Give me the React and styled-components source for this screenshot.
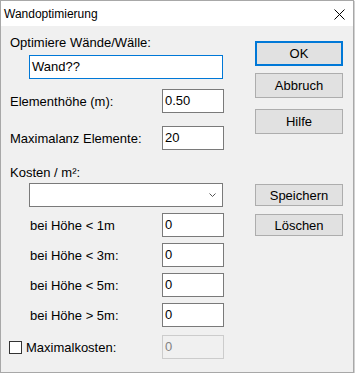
import React from "react"
import styled, { createGlobalStyle } from "styled-components"

const GlobalStyle = createGlobalStyle`
  html, body {
    margin: 0;
    padding: 0;
    background: #ffffff;
  }
  body {
    font-family: "Liberation Sans", Arial, sans-serif;
    color: #000;
  }
`

const Window = styled.div`
  width: 354px;
  height: 373px;
  box-sizing: border-box;
  border: 1px solid #a8a8a8;
  box-shadow: 1px 1px 1px rgba(0, 0, 0, 0.18);
  display: flex;
  flex-direction: column;
  background: #f0f0f0;
`

const TitleBar = styled.div`
  height: 25px;
  flex: none;
  background: #ffffff;
  display: flex;
  align-items: center;
  justify-content: space-between;
  padding: 0 8px 0 3px;
  font-size: 12px;
`

const CloseIcon = styled.svg`
  width: 11px;
  height: 11px;
  margin-top: 2px;
`

const Body = styled.div`
  flex: 1;
  display: flex;
  padding: 0 10px 0 9px;
`

const LeftColumn = styled.div`
  width: 214px;
  display: flex;
  flex-direction: column;
  padding-top: 8px;
`

const RightColumn = styled.div`
  margin-left: auto;
  width: 88px;
  display: flex;
  flex-direction: column;
  padding-top: 15px;
`

const Caption = styled.div`
  font-size: 13px;
  line-height: 18px;
  height: 18px;
  margin-top: ${({ $gap }) => $gap || 0}px;
`

const TextBox = styled.div`
  box-sizing: border-box;
  height: 24px;
  background: ${({ $disabled }) => ($disabled ? "#f0f0f0" : "#ffffff")};
  border: 1px solid
    ${({ $focused, $disabled }) =>
      $focused ? "#0078d7" : $disabled ? "#cccccc" : "#7a7a7a"};
  color: ${({ $disabled }) => ($disabled ? "#838383" : "#000")};
  font-size: 13px;
  line-height: 21px;
  padding: 0 2px;
  width: ${({ $width }) => $width}px;
  margin-left: ${({ $indent }) => $indent || 0}px;
  margin-top: ${({ $gap }) => $gap || 0}px;
`

const ComboBox = styled.div`
  box-sizing: border-box;
  height: 24px;
  width: 194px;
  margin-left: 19px;
  margin-top: 1px;
  background: #ffffff;
  border: 1px solid #7a7a7a;
  display: flex;
  align-items: center;
  justify-content: flex-end;
  padding-right: 6px;
`

const FieldRow = styled.div`
  display: flex;
  align-items: center;
  justify-content: space-between;
  margin-top: ${({ $gap }) => $gap}px;
`

const FieldLabel = styled.div`
  font-size: 13px;
  padding-left: ${({ $indent }) => $indent || 0}px;
  display: flex;
  align-items: center;
`

const CheckBox = styled.span`
  box-sizing: border-box;
  width: 13px;
  height: 13px;
  border: 1px solid #333333;
  background: #ffffff;
  margin-right: 4px;
  margin-left: -1px;
`

const Button = styled.div`
  box-sizing: border-box;
  height: ${({ $height }) => $height}px;
  margin-top: ${({ $gap }) => $gap}px;
  background: #e1e1e1;
  border: ${({ $default }) => ($default ? "2px solid #0078d7" : "1px solid #adadad")};
  font-size: 13px;
  display: flex;
  align-items: center;
  justify-content: center;
`

const heights = [
  { label: "bei Höhe < 1m", gap: 6 },
  { label: "bei Höhe < 3m:", gap: 6 },
  { label: "bei Höhe < 5m:", gap: 6 },
  { label: "bei Höhe > 5m:", gap: 6 },
]

export default function App() {
  return (
    <>
      <GlobalStyle />
      <Window>
        <TitleBar>
          <span>Wandoptimierung</span>
          <CloseIcon viewBox="0 0 11 11">
            <path d="M0.5 0.5 L10.5 10.5 M10.5 0.5 L0.5 10.5" stroke="#000" strokeWidth="1" fill="none" />
          </CloseIcon>
        </TitleBar>
        <Body>
          <LeftColumn>
            <Caption>Optimiere Wände/Wälle:</Caption>
            <TextBox $focused $width={194} $indent={19} $gap={3}>
              Wand??
            </TextBox>
            <FieldRow $gap={10}>
              <FieldLabel>Elementhöhe (m):</FieldLabel>
              <TextBox $width={62}>0.50</TextBox>
            </FieldRow>
            <FieldRow $gap={13}>
              <FieldLabel>Maximalanz Elemente:</FieldLabel>
              <TextBox $width={62}>20</TextBox>
            </FieldRow>
            <Caption $gap={14}>Kosten / m²:</Caption>
            <ComboBox>
              <svg width="7" height="4" viewBox="0 0 7 4">
                <path d="M0.5 0.5 L3.5 3.5 L6.5 0.5" stroke="#555" strokeWidth="1" fill="none" />
              </svg>
            </ComboBox>
            {heights.map((h) => (
              <FieldRow key={h.label} $gap={h.gap}>
                <FieldLabel $indent={20}>{h.label}</FieldLabel>
                <TextBox $width={62}>0</TextBox>
              </FieldRow>
            ))}
            <FieldRow $gap={8}>
              <FieldLabel>
                <CheckBox />
                Maximalkosten:
              </FieldLabel>
              <TextBox $width={62} $disabled>
                0
              </TextBox>
            </FieldRow>
          </LeftColumn>
          <RightColumn>
            <Button $default $height={25} $gap={0}>OK</Button>
            <Button $height={25} $gap={7}>Abbruch</Button>
            <Button $height={25} $gap={11}>Hilfe</Button>
            <Button $height={22} $gap={50}>Speichern</Button>
            <Button $height={22} $gap={8}>Löschen</Button>
          </RightColumn>
        </Body>
      </Window>
    </>
  )
}
